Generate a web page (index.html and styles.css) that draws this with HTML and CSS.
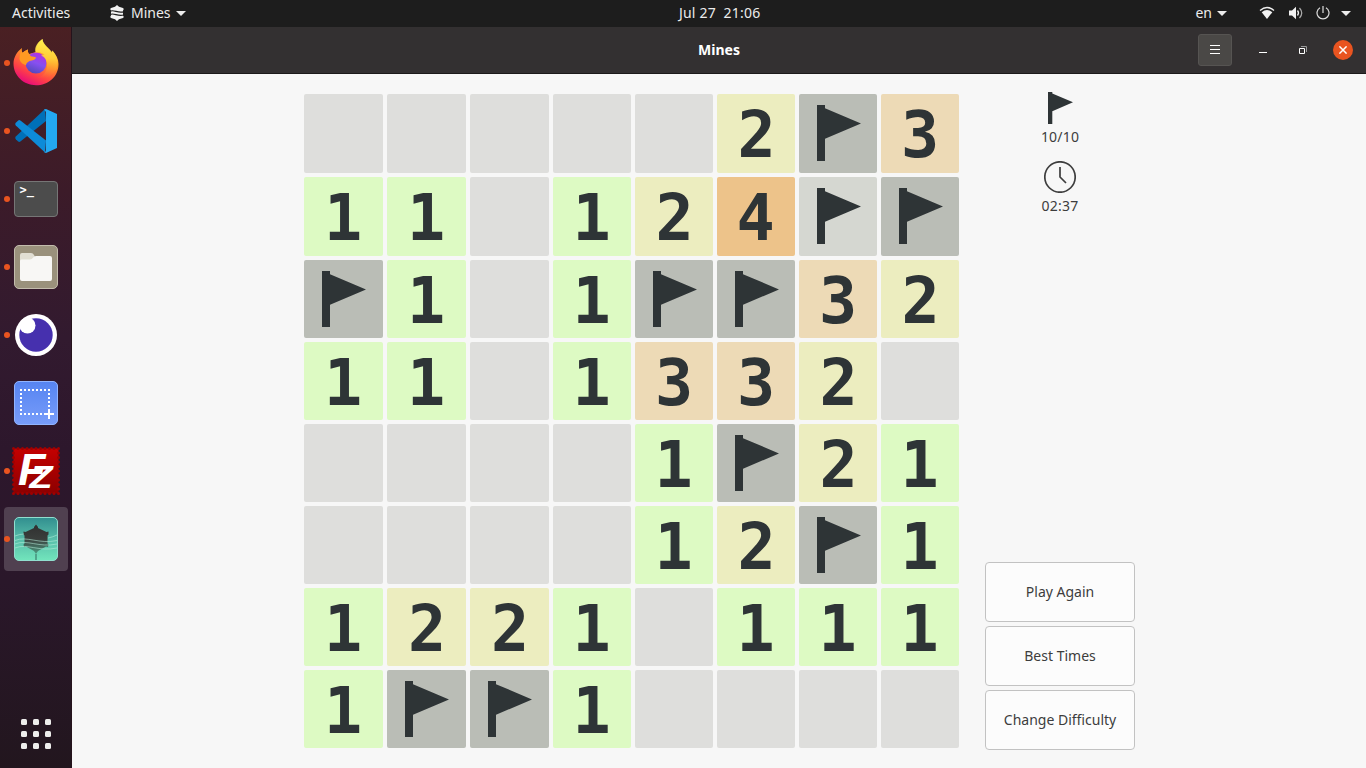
FILE: index.html
```html
<!DOCTYPE html>
<html lang="en">
<head>
<meta charset="utf-8">
<title>Mines</title>
<link rel="stylesheet" href="styles.css">
</head>
<body>
<svg class="defs" aria-hidden="true">
  <symbol id="flag" viewBox="0 0 78 78"><path d="M18 11h8v3.200l36 15.200-36 15.400V67h-8z"/></symbol>
</svg>
<header class="topbar">
  <div class="topbar-left">
    <span class="activities">Activities</span>
    <svg class="mine-icon" width="16" height="16" viewBox="0 0 16 16"><path fill="#f2f2f2" d="M8 0l2 1.700 4 1.300.8 1-.8 1.500v5l.8 1.500-.8 1-4 1.300L8 16l-2-1.700L2 13l-.8-1 .8-1.500v-5L1.200 4 2 3l4-1.300z"/><path d="M1 6.300c4-2.300 8 2.700 14 .3M1 9.500c4-2.300 8 2.700 14 .3" fill="none" stroke="#1d1d1d" stroke-width="1.200"/></svg>
    <span class="app-name">Mines</span>
    <i class="caret"></i>
  </div>
  <div class="clock">Jul 27&nbsp; 21:06</div>
  <div class="topbar-right">
    <span class="lang">en</span><i class="caret"></i>
    <svg class="wifi" width="16" height="14" viewBox="0 0 16 14"><path d="M1 4.600Q8-1.600 15 4.600" fill="none" stroke="#eee" stroke-width="1.300"/><path d="M2.700 6.200Q8 1.800 13.300 6.200L8 13z" fill="#f2f2f2"/></svg>
    <svg class="volume" width="16" height="14" viewBox="0 0 16 14"><path d="M1 4.500h3L8 .8v12.400L4 9.500H1z" fill="#f2f2f2"/><path d="M9.500 4.500q2 2.500 0 5" fill="none" stroke="#eee" stroke-width="1.300"/><path d="M11.500 2q4.500 5 0 10" fill="none" stroke="#aaa" stroke-width="1.200"/></svg>
    <svg class="power" width="14" height="14" viewBox="0 0 14 14"><path d="M4 1.700a6 6 0 1 0 6 0M7 0v7" fill="none" stroke="#ddd" stroke-width="1.200"/></svg>
    <i class="caret"></i>
  </div>
</header>
<div class="desktop">
  <nav class="dock">
    <div class="dock-item running">
      <svg width="48" height="48" viewBox="0 0 48 48">
        <defs>
          <linearGradient id="fx" x1=".8" y1="0" x2=".3" y2="1"><stop offset="0" stop-color="#fff04a"/><stop offset=".4" stop-color="#ff9a25"/><stop offset=".75" stop-color="#ff4146"/><stop offset="1" stop-color="#e5067f"/></linearGradient>
          <linearGradient id="fxg" x1=".7" y1="0" x2=".3" y2="1"><stop offset="0" stop-color="#b52ee0"/><stop offset=".5" stop-color="#8650f0"/><stop offset="1" stop-color="#5148b8"/></linearGradient>
          <linearGradient id="fxt" x1="0" y1="0" x2="0" y2="1"><stop offset="0" stop-color="#fff44f"/><stop offset=".5" stop-color="#ffd13a"/><stop offset="1" stop-color="#ff8a30" stop-opacity="0"/></linearGradient>
        </defs>
        <path fill="url(#fx)" d="M10 9c-.6 2-.4 3.500.4 4.800 1.400-1.200 3.400-2.500 5.600-3.300-.3 1.800.1 3.200 1 4.500L24 13c-.3-6 2.500-10 6.500-13 0 4 2.700 6.500 5.700 9.400 1.400 1.400 2.600 2.800 3.300 4.400l.5-2.400c4.300 4.300 6.500 8.700 6.500 13.500C46.500 38 36 46.200 24 46.200S1.500 37 1.500 24.500C1.500 18.500 5 12.500 10 9z"/>
        <circle cx="24" cy="24" r="10.500" fill="url(#fxg)"/>
        <path fill="url(#fxt)" d="M30.500 0c-4.500 3-8.500 7.500-7 13.500 3.500-.7 7-.3 9 2.500-1.500-.2-2.700 0-3.500.4 4 1.600 6 5 6 9.600 0 6.500-3.500 11.500-10 13 8 2 16-2 19.500-9 2.500-7 .5-13-4-18.600l-.5 2.400c-2-5-9-7.500-9.500-13.800z" opacity=".85"/>
        <path fill="#ff9a22" d="M10 9c-.6 2-.4 3.500.4 4.800 1.400-1.200 3.400-2.500 5.600-3.300-.3 1.800.1 3.200 1 4.500l2 2.200c2 .5 4 .5 5 1.300-.5 2.300-3.500 3-6.500 3.600-1.500.7-3 2-3.500 3.900-3-.5-6-3-6.500-6 .2-4 1-7.500 2.500-11z"/>
      </svg>
    </div>
    <div class="dock-item running">
      <svg width="48" height="48" viewBox="0 0 48 48"><path d="M33 2L3.800 29.500q-1.300 1.500 0 2.800l2.400 2.200q1 .8 2.200 0L34 14z" fill="#0070b8"/><path d="M33 45.500L3.800 18.500q-1.300-1.500 0-2.800L6.200 13.500q1-.8 2.200 0L34 33.500z" fill="#0d8bd8"/><path d="M32 2.500L34 2l11 5v34l-11 5-2.500-1q2.500.7 2.500-2V5z" fill="#23a9f2"/></svg>
    </div>
    <div class="dock-item running">
      <svg width="48" height="48" viewBox="0 0 48 48"><rect x="2.500" y="6.500" width="43" height="35" rx="3.500" fill="#4c4c4c" stroke="#767676"/><text class="prompt" x="7.500" y="19">&gt;_</text></svg>
    </div>
    <div class="dock-item running">
      <svg width="48" height="48" viewBox="0 0 48 48"><rect x="2.500" y="2.500" width="43" height="43" rx="4.500" fill="#9a917c" stroke="#c3bcad"/><path d="M8 16V12q0-2 2-2h9q2 0 3 2l1 2H38v5H8z" fill="#e1ded3"/><path d="M8 18q0-1.500 1.500-1.500H18q2 0 3-1.700 1-1.800 3-1.800h14q2 0 2 2V36q0 2-2 2H10q-2 0-2-2z" fill="#f8f7f5"/></svg>
    </div>
    <div class="dock-item running">
      <svg width="48" height="48" viewBox="0 0 48 48"><circle cx="24" cy="24" r="21" fill="#fff"/><circle cx="24" cy="24" r="16.700" fill="#4630ae"/><circle cx="15.500" cy="14.500" r="8" fill="#fff"/></svg>
    </div>
    <div class="dock-item">
      <svg width="48" height="48" viewBox="0 0 48 48"><defs><linearGradient id="ss" x1="0" y1="0" x2="0" y2="1"><stop offset="0" stop-color="#5684f1"/><stop offset="1" stop-color="#789dfa"/></linearGradient></defs><rect x="2.500" y="2.500" width="43" height="43" rx="4.500" fill="url(#ss)" stroke="#91b4ff"/><path d="M8 11H38M8 35H34" stroke="#fff" stroke-width="2" stroke-dasharray="2 2"/><path d="M9 14V34M37 14V30" stroke="#fff" stroke-width="2" stroke-dasharray="2 2"/><path d="M32 35h10M37 30v10" stroke="#fff" stroke-width="2"/></svg>
    </div>
    <div class="dock-item running">
      <svg class="filezilla" width="48" height="48" viewBox="0 0 48 48"><defs><linearGradient id="fz" x1="0" y1="0" x2="0" y2="1"><stop offset="0" stop-color="#c40000"/><stop offset="1" stop-color="#8c0000"/></linearGradient></defs><rect x="1.500" y="1.500" width="45" height="45" fill="url(#fz)"/><rect x="1.500" y="1.500" width="45" height="45" fill="none" stroke="#a00000" stroke-width="3" stroke-linecap="round" stroke-dasharray="0 4.500"/><text class="fz-f" x="6" y="38">F</text><text class="fz-z" x="17.500" y="41" textLength="23" lengthAdjust="spacingAndGlyphs">Z</text></svg>
    </div>
    <div class="dock-item running active">
      <svg width="48" height="48" viewBox="0 0 48 48"><defs><linearGradient id="sea" x1="0" y1="0" x2="0" y2="1"><stop offset="0" stop-color="#318e8f"/><stop offset=".5" stop-color="#57bda9"/><stop offset="1" stop-color="#72e5bc"/></linearGradient><linearGradient id="mn" x1="0" y1="0" x2="0" y2="1"><stop offset="0" stop-color="#303030"/><stop offset=".5" stop-color="#3a3e3c"/><stop offset="1" stop-color="#4d9d83"/></linearGradient></defs><rect x="2.500" y="2.500" width="43" height="43" rx="4.500" fill="url(#sea)" stroke="#91dfcf"/><path d="M24 9.500l2 2.500v1l8.500 4 2-.5v3l-1 1v8l1 1-.5 2.500-2-.5L26 36l-2 3-2-3-8-4.500-2 .5-.5-2.500 1-1v-8l-1-1v-3l2 .5 8.500-4v-1z" fill="url(#mn)"/><path d="M24 39v6" stroke="#478f7d" stroke-width="1.500"/><path d="M3 21Q8 19 12 19M36 23Q41 22 45 20M3 25.500c12-5 24 4 42 0M3 29c12-5 24 4 42 0M3 33c12-5 24 4 42 0" fill="none" stroke="#b7eddb" stroke-width=".8" opacity=".7"/></svg>
    </div>
    <div class="apps"><i></i><i></i><i></i><i></i><i></i><i></i><i></i><i></i><i></i></div>
  </nav>
  <section class="window">
    <div class="titlebar">
      <div class="title">Mines</div>
      <div class="controls">
        <button class="menu"><svg width="12" height="10" viewBox="0 0 12 10"><path d="M1 .5h10M1 4.500h10M1 8.500h10" stroke="#fff"/></svg></button>
        <svg class="minimize" width="8" height="1" viewBox="0 0 8 1"><path d="M0 .5h8" stroke="#fff"/></svg>
        <svg class="restore" width="8" height="8" viewBox="0 0 8 8"><path d="M.5 2.500h5v5h-5z" fill="none" stroke="#fff"/><path d="M2 .5h5.500V6" fill="none" stroke="#999"/></svg>
        <button class="close"><svg width="8" height="8" viewBox="0 0 8 8"><path d="M.4.4l7.200 7.200M7.600.4L.4 7.600" stroke="#fff" stroke-width="1.500"/></svg></button>
      </div>
    </div>
    <main class="game">
      <div class="board" id="board"></div>
      <aside class="side">
        <div class="stats">
          <svg class="side-flag" width="26" height="32" viewBox="0 0 26 32"><path d="M0 0h4.300v1.500L25 10.300 4.300 19.300V32H0z"/></svg>
          <div class="stat flags">10/10</div>
          <svg class="side-clock" width="32" height="32" viewBox="0 0 32 32"><circle cx="16" cy="16" r="15.200"/><path d="M16 6v10l6 6"/></svg>
          <div class="stat time">02:37</div>
        </div>
        <div class="actions">
          <button class="action play">Play Again</button>
          <button class="action best">Best Times</button>
          <button class="action change">Change Difficulty</button>
        </div>
      </aside>
    </main>
  </section>
</div>
<script src="board.js"></script>
</body>
</html>
```

FILE: board.js
```js
// Digits are neighbour counts, F is a flagged cell, H the hovered flag.
const rows = ['.....2F3', '11.124HF', 'F1.1FF32', '11.1332.', '....1F21', '....12F1', '1221.111', '1FF1....'];
const board = document.getElementById('board');
for (const c of rows.join('')) {
  const cell = document.createElement('div');
  cell.className = 'cell';
  if (c === 'F' || c === 'H') {
    cell.classList.add(c === 'H' ? 'hover' : 'flagged');
    cell.innerHTML = '<svg width="78" height="78"><use href="#flag"/></svg>';
  } else if (c !== '.') {
    cell.classList.add('n' + c);
    cell.textContent = c;
  }
  board.append(cell);
}
```

FILE: styles.css
```css
* { box-sizing: border-box; }
body { margin: 0; width: 1366px; height: 768px; overflow: hidden; background: #f6f6f6; color: #3d3d3d; font: 14px "Noto Sans", sans-serif; }
button { margin: 0; padding: 0; font: inherit; color: inherit; }
svg { display: block; flex: none; }
.defs { display: none; }

.topbar { height: 27px; padding-bottom: 1px; display: grid; grid-template-columns: 1fr auto 1fr; align-items: center; background: #1d1d1d; color: #ececec; line-height: 26px; }
.topbar-left, .topbar-right { display: flex; align-items: center; height: 26px; }
.topbar-left { padding-left: 12px; }
.activities { width: 97px; }
.mine-icon { margin-right: 6px; }
.app-name { width: 45px; }
.clock { width: 82px; white-space: nowrap; margin-left: 74px; letter-spacing: .2px; }
.topbar-right { justify-content: flex-end; padding-right: 15px; }
.caret { flex: none; border: solid transparent; border-width: 5px 5px 0; border-top-color: #ececec; }
.lang { margin-right: 5px; }
.wifi { margin-left: 32px; }
.volume { margin-left: 13px; }
.power { margin-left: 12px; margin-right: 11px; }

.desktop { display: flex; height: 741px; }
.dock { width: 72px; padding: 2px 4px 16px; display: flex; flex-direction: column; align-items: center; background: linear-gradient(#4a2023, #3c1b29 22%, #321a2f 42%, #2d172c 57%, #2a172a 75%, #22161e); border-right: 1px solid #25131c; }
.dock-item { position: relative; width: 64px; height: 68px; margin-left: 1px; display: flex; align-items: center; justify-content: center; }
.running::before { content: ""; position: absolute; left: 0; top: 31px; width: 6px; height: 6px; border-radius: 50%; background: #e95420; }
.active { height: 64px; margin-top: 2px; border-radius: 4px; background: #504050; }
.active::before { top: 29px; }
.apps { display: grid; grid-template-columns: repeat(3, 6px); grid-auto-rows: 6px; gap: 6px; margin-top: auto; margin-bottom: 3px; }
.apps i { border-radius: 1.5px; background: #eeeeec; }
.prompt { font: bold 12px "DejaVu Sans Mono", monospace; fill: #fff; }
.filezilla { overflow: visible; }
.fz-f, .fz-z { font: italic bold 45px "Liberation Sans", sans-serif; fill: #fff; }
.fz-z { font-size: 31px; }

.window { flex: 1; display: flex; flex-direction: column; }
.titlebar { height: 47px; display: grid; grid-template-columns: 1fr auto 1fr; align-items: center; background: #333031; border-bottom: 1px solid #1c1a1a; color: #fff; }
.title { grid-column: 2; font-weight: bold; padding-bottom: 2px; }
.controls { display: flex; align-items: center; justify-content: flex-end; padding-right: 13px; }
.menu { width: 34px; height: 32px; display: grid; place-items: center; background: #4a4846; border: 1px solid #565452; border-radius: 3px; margin-right: 27px; }
.minimize { margin-top: 5px; margin-right: 32px; }
.restore { margin-right: 26px; }
.close { width: 20px; height: 20px; display: grid; place-items: center; border: 0; border-radius: 50%; background: #e95420; }

.game { flex: 1; display: flex; padding: 20px 0 18px 232px; background: #f7f7f7; }
.board { display: grid; grid-template-columns: repeat(3, 79px) repeat(5, 78px); grid-template-rows: 79px 79px repeat(6, 78px); gap: 4px; }
.cell { border-radius: 2px; background: #dededc; color: #2e3436; text-align: center; text-indent: -1px; font: bold 63.5px/82px "DejaVu Sans Mono", monospace; overflow: hidden; }
.cell svg { fill: #2e3436; }
.flagged { background: #babdb6; }
.hover { background: #d5d7d1; }
.n1 { background: #ddfac3; }
.n2 { background: #ecedbf; text-indent: 1px; }
.n3 { background: #eddab6; text-indent: 0; }
.n4 { background: #edc38a; }

.side { width: 150px; margin-left: 26px; display: flex; flex-direction: column; justify-content: space-between; margin-top: -2px; margin-bottom: -2px; }
.stats { display: flex; flex-direction: column; align-items: center; }
.side-flag { fill: #2e3436; margin-left: 2px; }
.stat { line-height: 20px; margin-top: 3px; letter-spacing: .2px; }
.side-clock { margin-top: 14px; fill: none; stroke: #3d3d3d; stroke-width: 1.7; }
.actions { display: grid; gap: 4px; margin-bottom: 2px; }
.action { height: 60px; padding-bottom: 2px; border: 1px solid #c2c2c2; border-radius: 4px; background: #fcfcfc; }
```
